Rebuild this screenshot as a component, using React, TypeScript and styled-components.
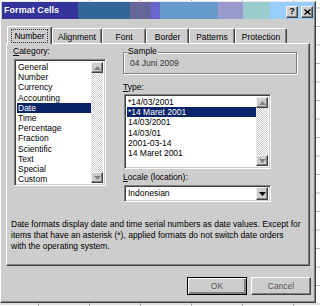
import React from "react";
import styled, { createGlobalStyle, css } from "styled-components";

const Global = createGlobalStyle`
  html, body { margin: 0; padding: 0; background: #fff; }
  body { font-family: "Liberation Sans", Arial, sans-serif; font-size: 8.5px; color: #000; }
  * { box-sizing: border-box; }
`;

const Sheet = styled.div`
  width: 320px;
  height: 306px;
  overflow: hidden;
  padding-top: 1px;
  background-color: #fff;
  background-image:
    linear-gradient(to right, #b4b4b4 1px, transparent 1px),
    linear-gradient(to bottom, #b4b4b4 1px, transparent 1px);
  background-size: 51px 100%, 100% 18.5px;
  background-position: 38px 0, 0 7.5px;
`;

const Dialog = styled.div`
  width: 316px;
  height: 302px;
  background: #cdcdcd;
  border: 1px solid;
  border-color: #e8e8e8 #404040 #404040 #ffffff;
  box-shadow: inset -1px -1px #808080;
  padding: 0 1px;
  display: flex;
  flex-direction: column;
`;

const TitleBar = styled.div`
  height: 17px;
  display: flex;
  align-items: center;
  padding-left: 2px;
  background: linear-gradient(
    to right,
    #333399 0 76px,
    #336699 76px 128px,
    #666699 128px 149px,
    #6666cc 149px 158px,
    #6699cc 158px 216px,
    #9999cc 216px 241px,
    #99cccc 241px 268px,
    #99ccff 268px 100%
  );
`;

const Title = styled.span`
  flex: 1;
  color: #fff;
  font-weight: bold;
  font-size: 9px;
  line-height: 17px;
  letter-spacing: 0.05px;
`;

const CaptionButtons = styled.div`
  display: flex;
  gap: 3px;
  align-self: flex-end;
  margin: 0 1px 1px 0;
`;

const CaptionButton = styled.div`
  width: 12px;
  height: 12px;
  background: #cdcdcd;
  border: 1px solid;
  border-color: #f4f4f4 #404040 #404040 #f4f4f4;
  box-shadow: inset -1px -1px #808080;
  display: flex;
  align-items: center;
  justify-content: center;
  font-weight: bold;
  font-size: 9px;
  line-height: 1;
  padding-bottom: 1px;
`;

const Body = styled.div`
  flex: 1;
  display: flex;
  flex-direction: column;
  padding: 7px 3px 0 4px;
`;

const TabStrip = styled.div`
  height: 17px;
  display: flex;
  align-items: flex-end;
  margin-left: 1px;
`;

const Tab = styled.div<{ $w: number; $active?: boolean }>`
  width: ${(p) => p.$w}px;
  height: 15px;
  background: #cdcdcd;
  border: 1px solid;
  border-bottom: none;
  border-color: #ffffff #404040 transparent #ffffff;
  box-shadow: inset -1px 0 #808080;
  border-radius: 2px 2px 0 0;
  display: flex;
  align-items: center;
  justify-content: center;
  font-size: 8.5px;
  padding-top: 1px;
  ${(p) =>
    p.$active &&
    css`
      height: 18px;
      margin-bottom: -1px;
      position: relative;
      z-index: 1;
      padding-bottom: 1px;
    `}
`;

const FocusBox = styled.span`
  outline: 1px dotted #333;
  padding: 1px 2px;
  line-height: 10px;
`;

const Panel = styled.div`
  width: 304px;
  height: 223px;
  border: 1px solid;
  border-color: #ffffff #404040 #404040 #ffffff;
  box-shadow: inset -1px -1px #808080;
  padding: 2px 0 0 4px;
  display: flex;
  flex-direction: column;
`;

const TopSection = styled.div`
  display: flex;
  gap: 17px;
  height: 156px;
`;

const LeftCol = styled.div`
  width: 93px;
  margin-left: 2px;
  display: flex;
  flex-direction: column;
`;

const RightCol = styled.div`
  width: 174px;
  display: flex;
  flex-direction: column;
`;

const Label = styled.div<{ $gap?: number }>`
  line-height: 11px;
  height: 11px;
  white-space: nowrap;
  margin-top: ${(p) => p.$gap ?? 0}px;
  u { text-decoration: underline; text-underline-offset: 1px; }
`;

const Sunken = css`
  background: #fff;
  border: 1px solid;
  border-color: #808080 #ffffff #ffffff #808080;
  box-shadow: inset 1px 1px #404040, inset -1px -1px #cdcdcd;
`;

const ListBox = styled.div<{ $w: number; $h: number; $top: number }>`
  ${Sunken}
  padding: 1px 2px 2px 2px;
  width: ${(p) => p.$w}px;
  height: ${(p) => p.$h}px;
  margin: ${(p) => p.$top}px 0 0 1px;
  display: flex;
`;

const Items = styled.div`
  flex: 1;
  overflow: hidden;
  display: flex;
  flex-direction: column;
  padding-top: 1px;
`;

const Item = styled.div<{ $sel?: boolean }>`
  height: 10.2px;
  line-height: 10.2px;
  padding-left: 1px;
  white-space: nowrap;
  flex: none;
  ${(p) =>
    p.$sel &&
    css`
      background: #0a246a;
      color: #fff;
    `}
`;

const ScrollBar = styled.div`
  width: 12px;
  display: flex;
  flex-direction: column;
  padding-top: 1px;
`;

const Track = styled.div`
  flex: 1;
  background-color: #fff;
  background-image: conic-gradient(#cdcdcd 25%, #fff 0 50%, #cdcdcd 0 75%, #fff 0);
  background-size: 2px 2px;
`;

const ArrowBtn = styled.div<{ $h?: number; $w?: number }>`
  height: ${(p) => p.$h ?? 11}px;
  width: ${(p) => (p.$w ? `${p.$w}px` : "auto")};
  background: #cdcdcd;
  border: 1px solid;
  border-color: #f0f0f0 #404040 #404040 #f0f0f0;
  box-shadow: inset -1px -1px #808080;
  display: flex;
  align-items: center;
  justify-content: center;
  flex: none;
`;

const GroupBox = styled.div`
  position: relative;
  margin-top: 6px;
  height: 22px;
  border: 1px solid #808080;
  box-shadow: inset 1px 1px #fff, 1px 1px #fff;
  padding: 5px 0 0 6px;
  line-height: 11px;
  color: #333;
`;

const Legend = styled.span`
  position: absolute;
  left: 3px;
  top: -7px;
  padding: 0 1px;
  background: #cdcdcd;
  line-height: 11px;
  color: #000;
`;

const Select = styled.div`
  ${Sunken}
  width: 147px;
  height: 17px;
  margin: 2px 0 0 1px;
  display: flex;
  align-items: center;
  padding: 2px 2px 2px 3px;
`;

const SelectText = styled.span`
  flex: 1;
  line-height: 11px;
`;

const Description = styled.div`
  margin-top: 17px;
  line-height: 11px;
  white-space: nowrap;
`;

const Footer = styled.div`
  display: flex;
  justify-content: flex-end;
  gap: 4px;
  margin-top: 11px;
`;

const Button = styled.div<{ $default?: boolean }>`
  width: 60px;
  height: 18px;
  background: #cdcdcd;
  border: 1px solid;
  border-color: #ffffff #404040 #404040 #ffffff;
  box-shadow: inset -1px -1px #808080;
  display: flex;
  align-items: center;
  justify-content: center;
  color: #555;
  font-size: 8.5px;
  ${(p) =>
    p.$default &&
    css`
      border: 1px solid #000;
      box-shadow: inset 1px 1px #fff, inset -2px -2px #808080;
    `}
`;

const Up = ({ color = "#808080" }: { color?: string }) => (
  <svg width="7" height="4" viewBox="0 0 7 4">
    <path d="M3.5 0 L7 4 L0 4 Z" fill={color} />
  </svg>
);
const Down = ({ color = "#808080" }: { color?: string }) => (
  <svg width="7" height="4" viewBox="0 0 7 4">
    <path d="M0 0 L7 0 L3.5 4 Z" fill={color} />
  </svg>
);

const Scroll = () => (
  <ScrollBar>
    <ArrowBtn>
      <Up />
    </ArrowBtn>
    <Track />
    <ArrowBtn>
      <Down />
    </ArrowBtn>
  </ScrollBar>
);

const categories = [
  "General",
  "Number",
  "Currency",
  "Accounting",
  "Date",
  "Time",
  "Percentage",
  "Fraction",
  "Scientific",
  "Text",
  "Special",
  "Custom",
];

const types = [
  "*14/03/2001",
  "*14 Maret 2001",
  "14/03/2001",
  "14/03/01",
  "2001-03-14",
  "14 Maret 2001",
];

const tabs: [string, number][] = [
  ["Number", 45],
  ["Alignment", 50],
  ["Font", 44],
  ["Border", 43],
  ["Patterns", 46],
  ["Protection", 52],
];

export default function App() {
  return (
    <>
      <Global />
      <Sheet>
        <Dialog>
          <TitleBar>
            <Title>Format Cells</Title>
            <CaptionButtons>
              <CaptionButton>?</CaptionButton>
              <CaptionButton>
                <svg width="7" height="6" viewBox="0 0 7 6">
                  <path d="M0.5 0.5 L6.5 5.5 M6.5 0.5 L0.5 5.5" stroke="#000" strokeWidth="1.4" />
                </svg>
              </CaptionButton>
            </CaptionButtons>
          </TitleBar>
          <Body>
            <TabStrip>
              {tabs.map(([t, w], i) => (
                <Tab key={t} $w={w} $active={i === 0}>
                  {i === 0 ? <FocusBox>{t}</FocusBox> : t}
                </Tab>
              ))}
            </TabStrip>
            <Panel>
              <TopSection>
                <LeftCol>
                  <Label>
                    <u>C</u>ategory:
                  </Label>
                  <ListBox $w={92} $h={127} $top={2}>
                    <Items>
                      {categories.map((c) => (
                        <Item key={c} $sel={c === "Date"}>
                          {c}
                        </Item>
                      ))}
                    </Items>
                    <Scroll />
                  </ListBox>
                </LeftCol>
                <RightCol>
                  <GroupBox>
                    <Legend>Sample</Legend>
                    04 Juni 2009
                  </GroupBox>
                  <Label $gap={8}>
                    <u>T</u>ype:
                  </Label>
                  <ListBox $w={147} $h={75} $top={1}>
                    <Items>
                      {types.map((t, i) => (
                        <Item key={i} $sel={i === 1}>
                          {t}
                        </Item>
                      ))}
                    </Items>
                    <Scroll />
                  </ListBox>
                  <Label $gap={3}>
                    <u>L</u>ocale (location):
                  </Label>
                  <Select>
                    <SelectText>Indonesian</SelectText>
                    <ArrowBtn $h={13} $w={12}>
                      <Down color="#000" />
                    </ArrowBtn>
                  </Select>
                </RightCol>
              </TopSection>
              <Description>
                Date formats display date and time serial numbers as date values. Except for
                <br />
                items that have an asterisk (*), applied formats do not switch date orders
                <br />
                with the operating system.
              </Description>
            </Panel>
            <Footer>
              <Button $default>OK</Button>
              <Button>Cancel</Button>
            </Footer>
          </Body>
        </Dialog>
      </Sheet>
    </>
  );
}
